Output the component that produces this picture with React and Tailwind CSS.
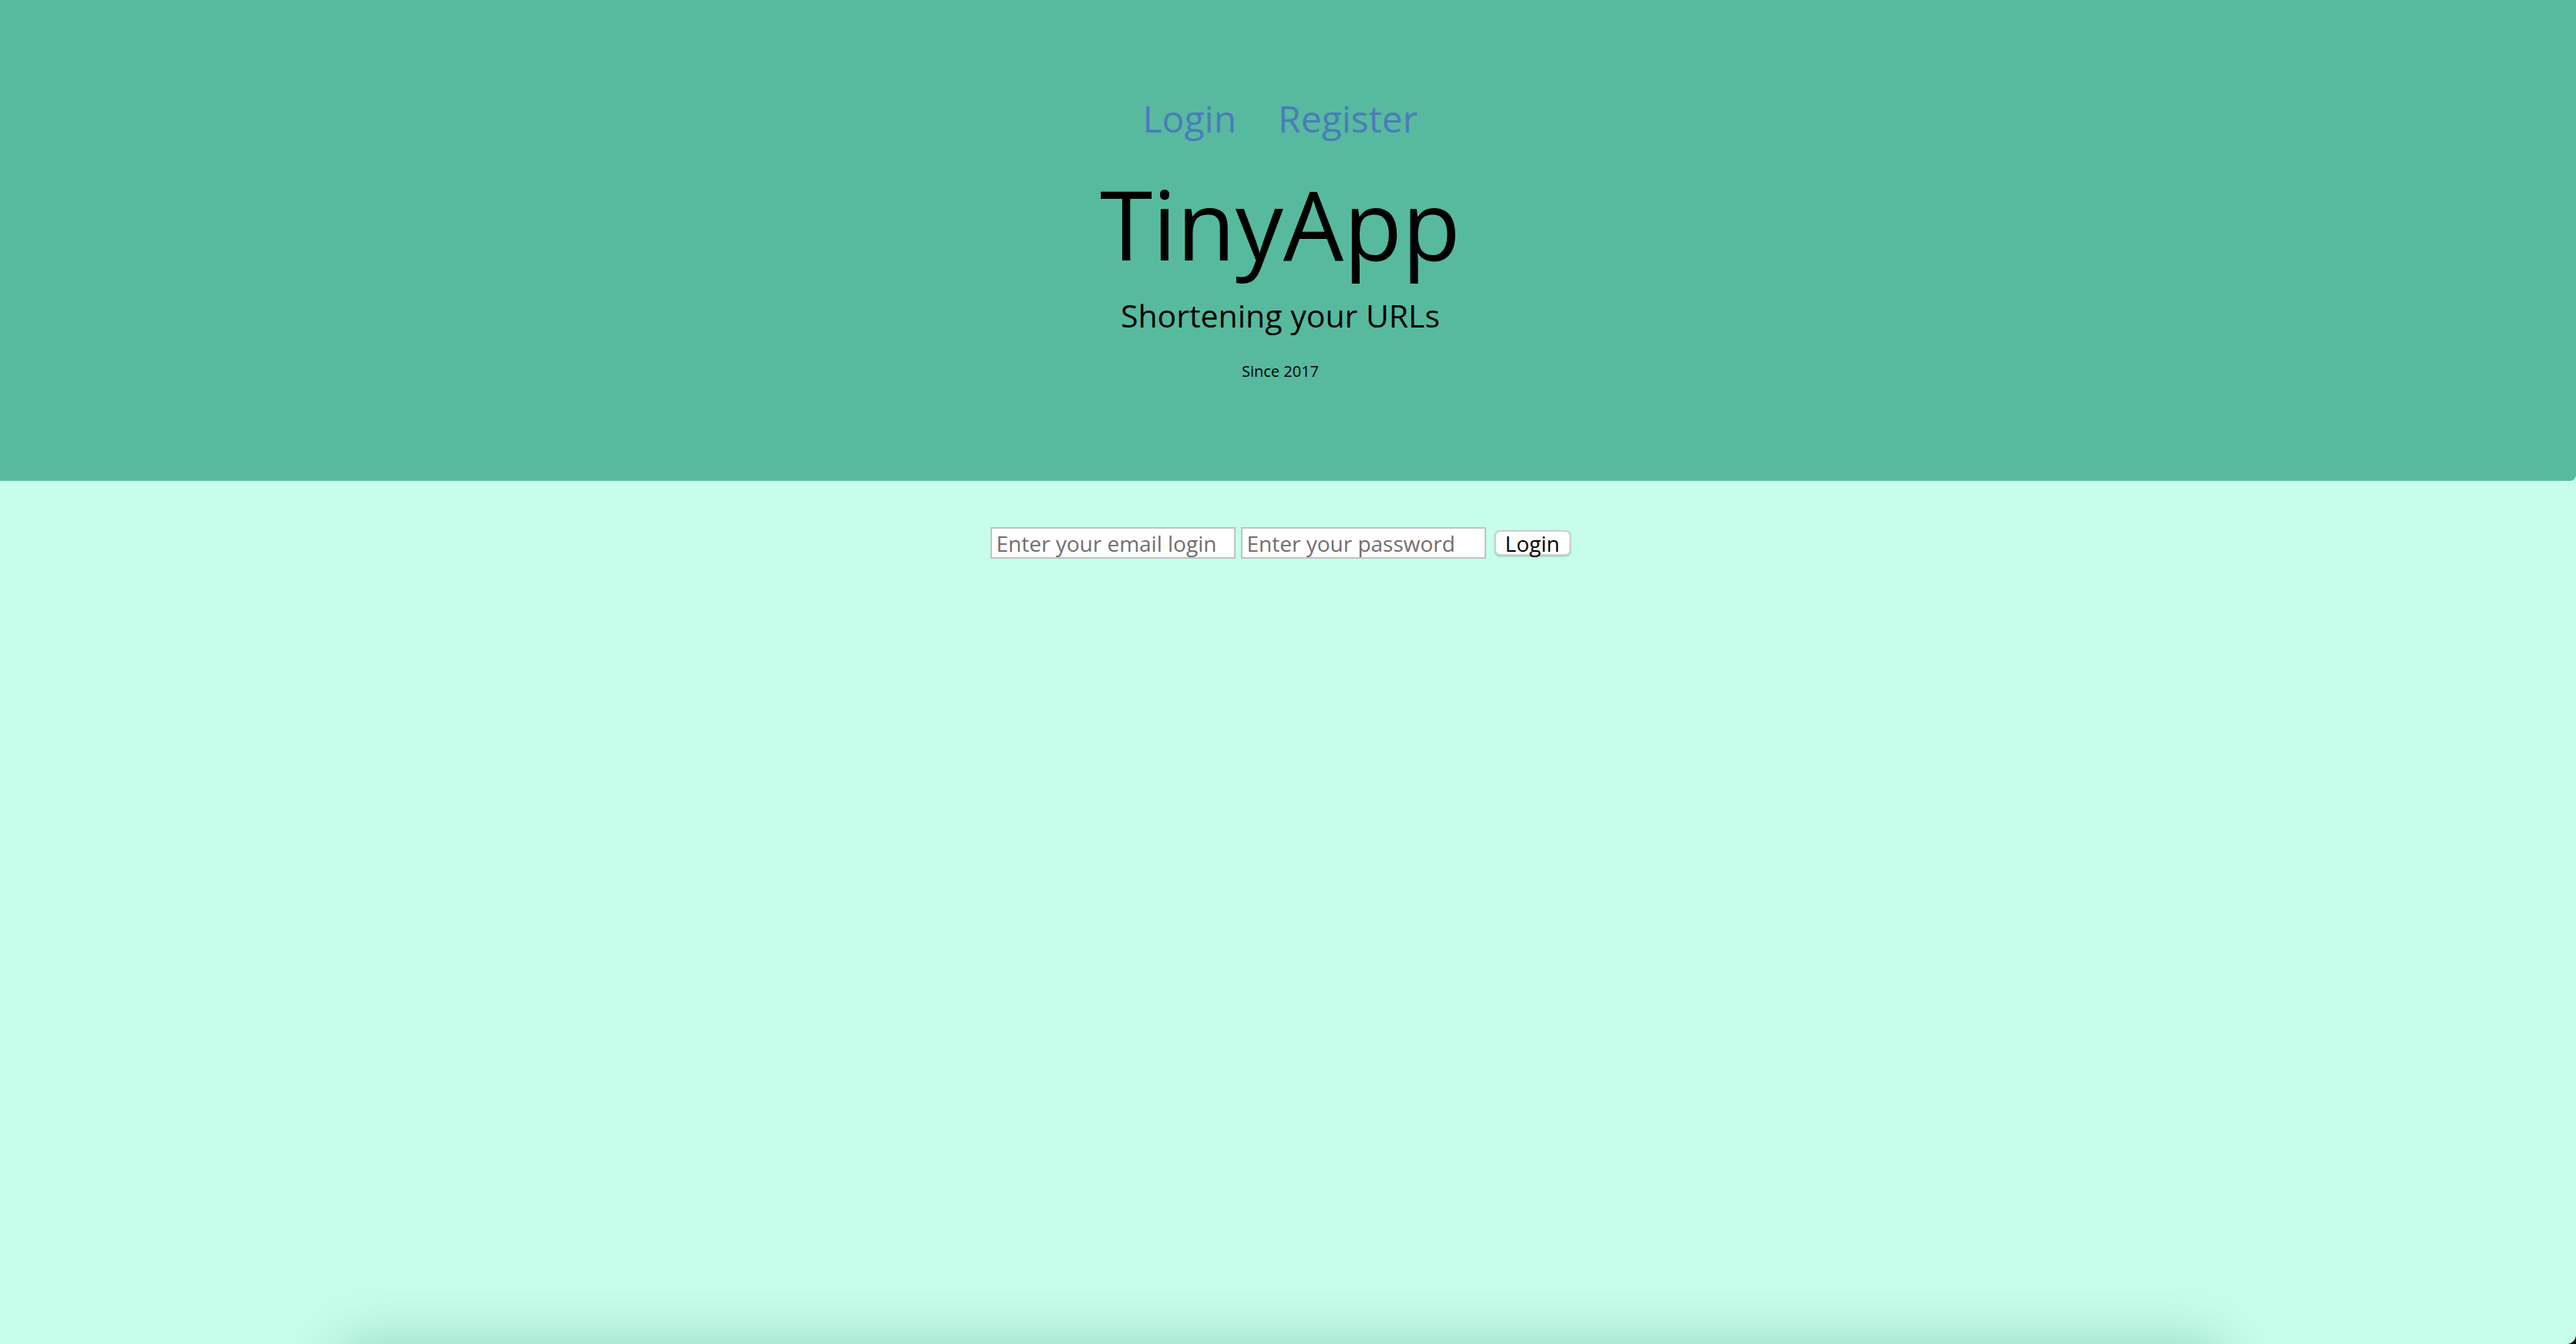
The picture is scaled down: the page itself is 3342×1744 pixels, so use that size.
export default function App() {
  return (
    <div className="h-[1744px] w-full overflow-hidden bg-black">
      <div
        className="flex h-full flex-col overflow-hidden rounded-br-[12px] bg-[#c7fdeb]"
        style={{ fontFamily: '"Open Sans", "Noto Sans", sans-serif' }}
      >
        {/* header */}
        <header className="flex h-[624px] shrink-0 flex-col items-center rounded-br-[8px] bg-[#57ba9e] pr-[20px] pt-[130px] text-black">
          <nav className="flex gap-[54px] text-[48px] leading-none text-[#4a7bbb]">
            <a href="#">Login</a>
            <a href="#">Register</a>
          </nav>
          <h1 className="mt-[50px] text-[124px] leading-none">TinyApp</h1>
          <h2 className="mt-[37px] text-[41px] leading-none">Shortening your URLs</h2>
          <p className="mt-[42px] text-[20px] leading-none">Since 2017</p>
        </header>

        {/* main */}
        <main className="flex flex-1 flex-col items-center pr-[20px] pt-[60px]">
          <form className="flex items-center" onSubmit={(e) => e.preventDefault()}>
            <input
              type="email"
              placeholder="Enter your email login"
              className="h-[41px] w-[318px] border-2 border-[#c2c2c2] bg-white px-[6px] text-[28px] leading-none placeholder:text-[#6f6f6f] focus:outline-none"
            />
            <input
              type="password"
              placeholder="Enter your password"
              className="ml-[7px] h-[41px] w-[318px] border-2 border-[#c2c2c2] bg-white px-[6px] text-[28px] leading-none placeholder:text-[#6f6f6f] focus:outline-none"
            />
            <button
              type="submit"
              className="ml-[11px] h-[33px] w-[99px] rounded-[7px] border-2 border-[#d0d0d0] bg-white text-[28px] leading-none text-black shadow-[0_1px_2px_rgba(0,0,0,0.25)]"
            >
              Login
            </button>
          </form>

          <div className="mb-[-400px] mt-auto h-[400px] w-[2440px] shrink-0 shadow-[0_0_70px_rgba(20,110,80,0.28)]" />
        </main>
      </div>
    </div>
  );
}
